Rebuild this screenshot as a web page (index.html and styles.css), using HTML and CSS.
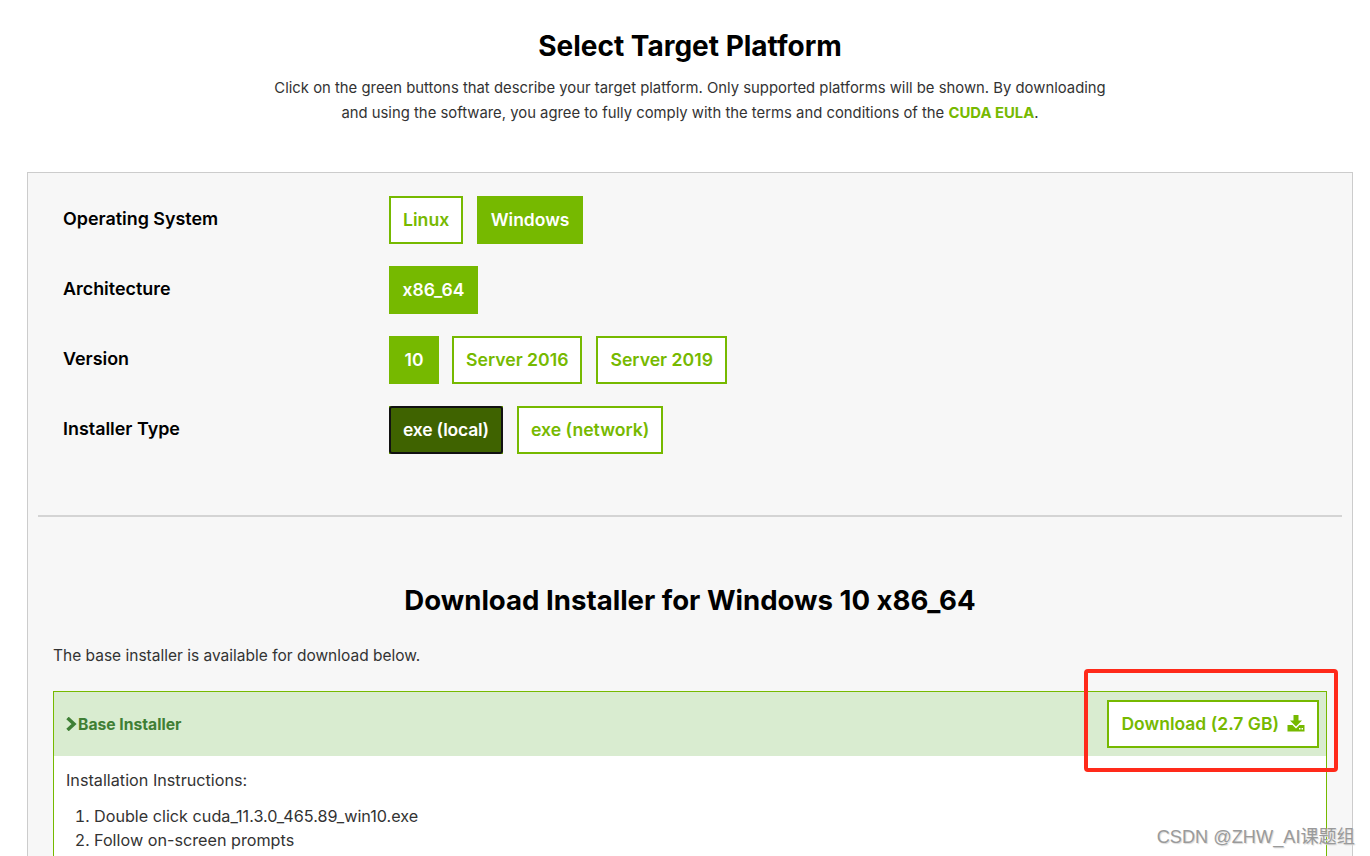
FILE: index.html
```html
<!DOCTYPE html>
<html>
  <head>
    <meta charset="UTF-8" />
    <title>CUDA Toolkit</title>
    <link rel="stylesheet" href="styles.css">
  </head>
  <body>
    <header class="intro">
      <h1 class="intro__title">Select Target Platform</h1>
      <p class="intro__text">Click on the green buttons that describe your target platform. Only supported platforms will be shown. By downloading<br>and using the software, you agree to fully comply with the terms and conditions of the <a class="intro__link" href="#">CUDA EULA</a>.</p>
    </header>

    <main class="panel">
      <section class="selector">
        <div class="selector__row">
          <div class="selector__label">Operating System</div>
          <div class="selector__options">
            <a class="option" href="#">Linux</a>
            <a class="option option--on" href="#">Windows</a>
          </div>
        </div>
        <div class="selector__row">
          <div class="selector__label">Architecture</div>
          <div class="selector__options">
            <a class="option option--on" href="#">x86_64</a>
          </div>
        </div>
        <div class="selector__row">
          <div class="selector__label">Version</div>
          <div class="selector__options">
            <a class="option option--on option--short" href="#">10</a>
            <a class="option" href="#">Server 2016</a>
            <a class="option" href="#">Server 2019</a>
          </div>
        </div>
        <div class="selector__row">
          <div class="selector__label">Installer Type</div>
          <div class="selector__options">
            <a class="option option--focus" href="#">exe (local)</a>
            <a class="option" href="#">exe (network)</a>
          </div>
        </div>
      </section>

      <hr class="panel__rule" />

      <section class="download">
        <h2 class="download__title">Download Installer for Windows 10 x86_64</h2>
        <p class="download__note">The base installer is available for download below.</p>
        <div class="installer">
          <div class="installer__head">
            <div class="installer__name">
              <svg class="installer__chevron" width="11" height="14" viewBox="0 0 11 14"><path d="M1.500 1 L8 7 L1.500 13" fill="none" stroke="#3f7f35" stroke-width="3.500"/></svg>
              <span>Base Installer</span>
            </div>
            <a class="option option--download" href="#">
              <span>Download (2.7 GB)</span>
              <svg width="18" height="17" viewBox="0 0 18 17"><path fill-rule="evenodd" d="M6.500 0h5v5.500h3.500L9 11.500 3 5.500h3.500z M0.500 10h5l3.500 3.500 3.500-3.500h5v6.500H0.500z M12 13h1.500v1.500H12z M14.500 13H16v1.500h-1.500z" fill="#76b900"/></svg>
            </a>
          </div>
          <div class="installer__body">
            <p class="installer__text">Installation Instructions:</p>
            <ol class="installer__steps">
              <li>Double click cuda_11.3.0_465.89_win10.exe</li>
              <li>Follow on-screen prompts</li>
            </ol>
          </div>
        </div>
      </section>
    </main>

    <div class="callout"></div>
    <div class="watermark">CSDN @ZHW_AI课题组</div>
  </body>
</html>
```

FILE: styles.css
```css
:root {
  --color-brand: #76b900;
  --color-brand-dark: #3f6300;
  --color-main: #000;
  --color-text: #333;
  --color-line: #ccc;
  --color-pad: #f7f7f7;
  --color-head: #d9ecd0;
  --font-main: Inter, "Noto Sans", "Noto Sans CJK SC", sans-serif;
}

* {
  box-sizing: border-box;
  margin: 0;
  padding: 0;
}

html,
body {
  height: 856px;
  overflow: hidden;
}

body {
  background-color: #fff;
  font-family: var(--font-main);
  font-feature-settings: "calt" 0;
  color: var(--color-text);
  position: relative;
}

a {
  text-decoration: none;
}

.intro {
  height: 172px;
  padding: 28px 0 0 10px;
  text-align: center;
}

.intro__title {
  font-size: 28px;
  line-height: 36px;
  font-weight: 700;
  color: var(--color-main);
}

.intro__text {
  margin-top: 12px;
  font-size: 14.850px;
  line-height: 25px;
}

.intro__link {
  color: var(--color-brand);
  font-weight: 700;
}

.panel {
  margin: 0 17px 0 27px;
  height: 700px;
  padding: 23px 10px 0;
  background-color: var(--color-pad);
  border: 1px solid var(--color-line);
}

.selector {
  display: flex;
  flex-direction: column;
  gap: 22px;
  padding: 0 0 61px 25px;
}

.selector__row {
  display: flex;
  align-items: flex-start;
}

.selector__label {
  width: 326px;
  padding-top: 12px;
  font-size: 17.900px;
  line-height: 22px;
  font-weight: 600;
  color: var(--color-main);
}

.selector__options {
  display: flex;
  gap: 14px;
}

.option {
  display: flex;
  align-items: center;
  justify-content: center;
  height: 48px;
  padding: 0 12px 2px;
  background-color: #fff;
  border: 2px solid var(--color-brand);
  color: var(--color-brand);
  font-size: 17.650px;
  font-weight: 600;
}

.option--on {
  padding: 0 11.500px 2px;
  background-color: var(--color-brand);
  color: #fff;
  font-size: 17.500px;
}

.option--short {
  width: 50px;
  margin-right: -1px;
}

.option--focus {
  position: relative;
  width: 114px;
  padding: 0 0 2px;
  background-color: var(--color-brand-dark);
  color: #fff;
  font-size: 17.500px;
  letter-spacing: -0.200px;
}

.option--focus::before {
  content: " ";
  position: absolute;
  top: -2px;
  right: -2px;
  bottom: -2px;
  left: -2px;
  border: 2px solid #111;
  border-radius: 3px;
}

.option--download {
  gap: 8px;
  font-size: 17.500px;
}

.panel__rule {
  border: none;
  height: 2px;
  background-color: #d4d4d4;
}

.download {
  padding: 0 15px;
}

.download__title {
  margin-top: 65px;
  font-size: 27.600px;
  line-height: 36px;
  font-weight: 700;
  color: var(--color-main);
  text-align: center;
}

.download__note {
  margin-top: 27px;
  font-size: 15.500px;
  line-height: 22px;
}

.installer {
  margin-top: 24px;
  background-color: #fff;
  border: 1px solid var(--color-brand);
  height: 300px;
}

.installer__head {
  display: flex;
  justify-content: space-between;
  align-items: center;
  height: 64px;
  padding: 0 7px 0 12px;
  background-color: var(--color-head);
}

.installer__name {
  display: flex;
  align-items: center;
  gap: 1px;
  font-size: 15.700px;
  font-weight: 700;
  color: #3f7f35;
}

.installer__body {
  padding: 12px 12px;
  font-size: 16.200px;
  line-height: 24px;
}

.installer__steps {
  margin-top: 12px;
  padding-left: 28px;
}

.callout {
  position: absolute;
  left: 1084px;
  top: 669px;
  width: 254px;
  height: 103px;
  border: 4px solid #ff2a1a;
  border-radius: 4px;
}

.watermark {
  position: absolute;
  right: 15px;
  top: 825px;
  font-family: "Liberation Sans", "Noto Sans CJK SC", sans-serif;
  font-size: 18.200px;
  line-height: 24px;
  color: #9a9a9a;
  text-shadow: 1px 1px 1px #d8d8d8;
}
```
